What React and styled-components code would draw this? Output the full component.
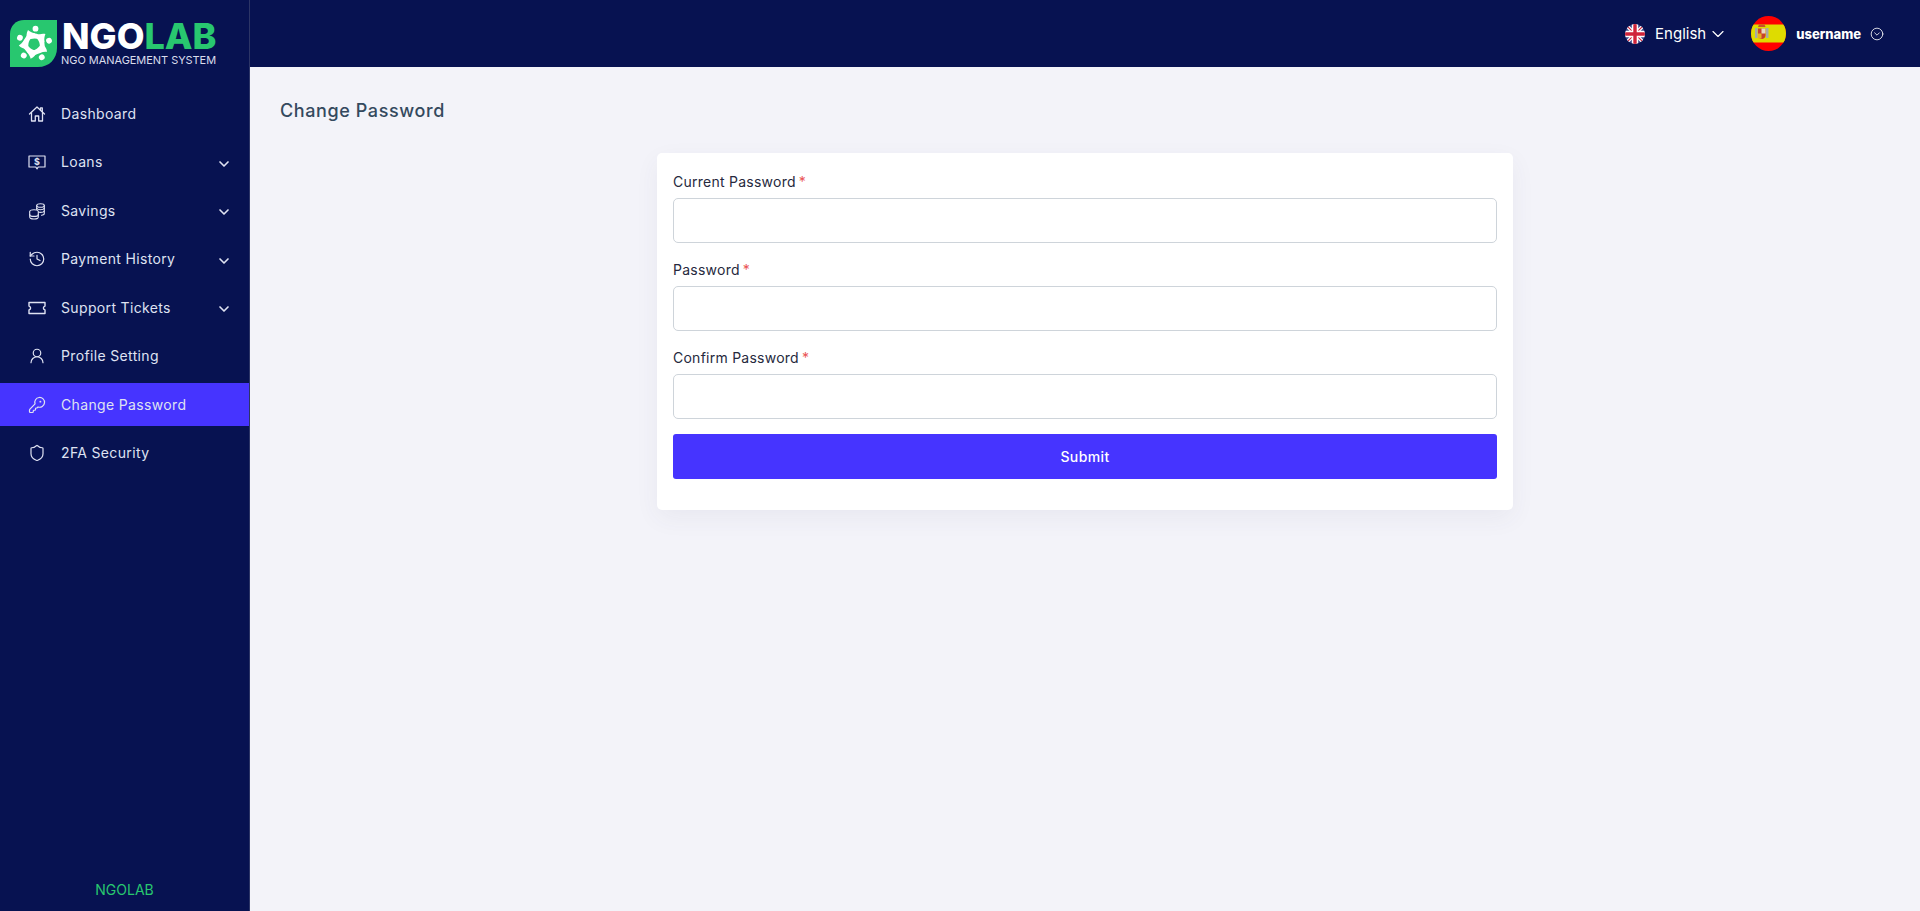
import React from "react";
import styled, { createGlobalStyle } from "styled-components";
import { History, UserRound, KeyRound, Shield, ChevronDown, CircleChevronDown } from "lucide-react";

const Global = createGlobalStyle`
  * { box-sizing: border-box; }
  html, body { margin: 0; padding: 0; height: 100%; }
  body { font-family: Inter, "Open Sans", "Liberation Sans", sans-serif; background: #f3f3f9; }
`;

const Shell = styled.div`
  display: flex;
  height: 911px;
  overflow: hidden;
`;

const Sidebar = styled.aside`
  width: 250px;
  flex: none;
  background: #071251;
  border-right: 1px solid #2c3566;
  display: flex;
  flex-direction: column;
`;

const LogoBar = styled.div`
  height: 67px;
  padding: 20px 0 0 10px;
  display: flex;
  gap: 4px;
  flex: none;
`;

const LogoWords = styled.div`
  display: flex;
  flex-direction: column;
`;

const LogoTitle = styled.div`
  font-size: 36px;
  line-height: 32px;
  height: 34px;
  font-weight: 800;
  letter-spacing: 0;
  color: #fff;
  margin-left: 1px;
  span { color: #28c76f; }
`;

const LogoSub = styled.div`
  font-size: 11px;
  line-height: 13px;
  color: #d9dcec;
  white-space: nowrap;
  letter-spacing: -0.05px;
`;

const Menu = styled.nav`
  padding-top: 25px;
  display: flex;
  flex-direction: column;
  gap: 5.5px;
`;

const MenuRow = styled.a`
  height: 43px;
  display: flex;
  align-items: center;
  padding: 0 17px 0 28px;
  color: #dfe2f2;
  font-size: 14px;
  font-weight: 420;
  letter-spacing: 0.35px;
  background: ${p => (p.$active ? "#4634ff" : "transparent")};
  svg { flex: none; }
`;

const MenuIcon = styled.span`
  width: 17px;
  height: 18px;
  margin-right: 16px;
  display: flex;
  align-items: center;
  justify-content: center;
`;

const MenuLabel = styled.span`
  flex: 1;
  margin-top: -1px;
`;

const MenuCaret = styled(ChevronDown)`
  margin-top: 3px;
`;

const SideFooter = styled.div`
  margin-top: auto;
  height: 36px;
  padding-top: 6px;
  text-align: center;
  color: #28c76f;
  font-size: 14px;
`;

const Main = styled.div`
  flex: 1;
  display: flex;
  flex-direction: column;
  min-width: 0;
`;

const TopBar = styled.header`
  height: 67px;
  flex: none;
  background: #071251;
  display: flex;
  align-items: center;
  justify-content: flex-end;
  padding-right: 36px;
  color: #fff;
`;

const LangBox = styled.div`
  display: flex;
  align-items: center;
  font-size: 15px;
  margin-right: 23px;
  gap: 10px;
`;

const LangCaret = styled(ChevronDown)`
  margin-left: -8px;
`;

const LangFlag = styled.svg`
  width: 20px;
  height: 20px;
  border-radius: 50%;
`;

const UserBox = styled.div`
  display: flex;
  align-items: center;
  font-size: 13px;
  font-weight: 800;
`;

const Avatar = styled.svg`
  width: 35px;
  height: 35px;
  border-radius: 50%;
  margin-right: 10px;
`;

const UserName = styled.span`
  margin-right: 9px;
`;

const Content = styled.main`
  padding: 30px 30px;
`;

const PageTitle = styled.h1`
  margin: 0 0 29px;
  font-size: 18px;
  line-height: 27px;
  font-weight: 450;
  letter-spacing: 0.6px;
  color: #34495e;
`;

const CardWrap = styled.div`
  display: flex;
  justify-content: center;
`;

const Card = styled.form`
  width: 856px;
  height: 357px;
  background: #fff;
  border-radius: 5px;
  padding: 18px 16px 16px;
  box-shadow: 0 8px 24px rgba(60, 60, 110, 0.06);
`;

const Field = styled.div`
  margin-bottom: 16px;
`;

const Label = styled.label`
  display: block;
  height: 21px;
  margin-bottom: 6px;
  font-size: 14px;
  line-height: 21px;
  font-weight: 420;
  color: #26293d;
  letter-spacing: 0.25px;
  i { color: #ea5455; font-style: normal; margin-left: 3px; }
`;

const Input = styled.input`
  display: block;
  width: 100%;
  height: 45px;
  border: 1px solid #ced4da;
  border-radius: 5px;
  background: #fff;
  outline: none;
`;

const Submit = styled.button`
  display: block;
  width: 100%;
  height: 45px;
  border: 0;
  border-radius: 3px;
  margin-top: -1px;
  background: #4634ff;
  color: #fff;
  font-family: inherit;
  font-size: 14px;
  font-weight: 450;
  letter-spacing: 0.4px;
`;

const Svg = ({ children, w = 1.3 }) => (
  <svg width="18" height="18" viewBox="0 0 18 18" fill="none" stroke="currentColor" strokeWidth={w} strokeLinejoin="round" strokeLinecap="round">
    {children}
  </svg>
);

const HomeIcon = () => (
  <Svg>
    <path d="M1.5 9 9 2l7.5 7" />
    <path d="M3.5 7.5V16h3.8v-5h3.4v5h3.8V7.5" />
    <path d="M12.5 4.8V2.8h1.8v3.600" />
  </Svg>
);

const LoanIcon = () => (
  <Svg w={1.2}>
    <path d="M1 3h16v11H10.200L9 15.800 7.800 14H1z" />
    <text x="9" y="12" textAnchor="middle" fontSize="9" fontWeight="700" fill="currentColor" stroke="none">$</text>
  </Svg>
);

const CoinsIcon = () => (
  <Svg w={1.1}>
    <ellipse cx="12.500" cy="3.500" rx="3.800" ry="1.800" />
    <path d="M8.700 3.500v7.500M16.300 3.500v8c0 1-1.600 1.700-2.800 1.800" />
    <path d="M8.700 6.200c.5 1 2.200 1.500 3.800 1.500s3.300-.5 3.800-1.500M8.700 8.900c.5 1 2.200 1.500 3.800 1.500s3.300-.5 3.800-1.500" />
    <ellipse cx="6" cy="9.800" rx="4.300" ry="2" fill="#071251" />
    <path d="M1.700 9.800v5.200c0 1.200 2 2 4.300 2s4.300-.8 4.300-2V9.800" fill="#071251" />
    <path d="M1.700 12.400c0 1.200 2 2 4.300 2s4.300-.8 4.300-2" />
  </Svg>
);

const TicketIcon = () => (
  <Svg w={1.4}>
    <path d="M1 3.500h16v3.600c-1.200.3-1.600 1-1.600 1.900s.4 1.600 1.600 1.900v3.600H1v-3.600c1.200-.3 1.600-1 1.600-1.900S2.200 7.400 1 7.100z" />
  </Svg>
);

const items = [
  { label: "Dashboard", Custom: HomeIcon },
  { label: "Loans", Custom: LoanIcon, sub: true },
  { label: "Savings", Custom: CoinsIcon, sub: true },
  { label: "Payment History", Icon: History, sub: true },
  { label: "Support Tickets", Custom: TicketIcon, sub: true },
  { label: "Profile Setting", Icon: UserRound },
  { label: "Change Password", Icon: KeyRound, active: true },
  { label: "2FA Security", Icon: Shield },
];

const LabeledInput = ({ label }) => (
  <Field>
    <Label>{label}<i>*</i></Label>
    <Input type="password" />
  </Field>
);

const angles = [0, 72, 144, 216, 288];

const LogoMark = () => (
  <svg width="47" height="47" viewBox="0 0 47 47">
    <path d="M14 0H47V28C47 39 39 47 28 47H0V14C0 6 6 0 14 0Z" fill="#28c76f" />
    <g fill="#fff">
      {angles.map(a => (
        <g key={a} transform={`rotate(${a} 24 24)`}>
          <circle cx="25.500" cy="8.700" r="2.900" />
          <path d="M18 10C21 13 26 13.500 29.500 14.500C32.500 16 34 19 34.500 22C31 19.500 28 18.800 24.500 18.500C22 18.500 19.500 19.300 17.800 20.500C16 17 16.200 13 18 10Z" />
        </g>
      ))}
    </g>
  </svg>
);

export default function App() {
  return (
    <Shell>
      <Global />
      <Sidebar>
        <LogoBar>
          <LogoMark />
          <LogoWords>
            <LogoTitle>NGO<span>LAB</span></LogoTitle>
            <LogoSub>NGO MANAGEMENT SYSTEM</LogoSub>
          </LogoWords>
        </LogoBar>
        <Menu>
          {items.map(({ label, Icon, Custom, sub, active }) => (
            <MenuRow key={label} $active={active}>
              <MenuIcon>{Custom ? <Custom /> : <Icon size={18} strokeWidth={1.6} />}</MenuIcon>
              <MenuLabel>{label}</MenuLabel>
              {sub && <MenuCaret size={16} strokeWidth={2.5} />}
            </MenuRow>
          ))}
        </Menu>
        <SideFooter>NGOLAB</SideFooter>
      </Sidebar>
      <Main>
        <TopBar>
          <LangBox>
            <LangFlag viewBox="0 0 20 20">
              <rect width="20" height="20" fill="#3b4a8c" />
              <path d="M0 0L20 20M20 0L0 20" stroke="#fff" strokeWidth="3.600" />
              <path d="M0 0L20 20M20 0L0 20" stroke="#d0243a" strokeWidth="1.200" />
              <path d="M10 0V20M0 10H20" stroke="#fff" strokeWidth="6.400" />
              <path d="M10 0V20M0 10H20" stroke="#d0243a" strokeWidth="3.400" />
            </LangFlag>
            <span>English</span>
            <LangCaret size={20} strokeWidth={1.4} />
          </LangBox>
          <UserBox>
            <Avatar viewBox="0 0 35 35">
              <rect width="35" height="35" fill="#f00" />
              <rect y="8.500" width="35" height="18" fill="#dedc00" />
              <rect x="4" y="12" width="2.500" height="10" fill="#a8a8a8" />
              <rect x="15" y="12" width="2.500" height="10" fill="#a8a8a8" />
              <path d="M7 12.500h7.500v7c0 2-1.700 3.500-3.700 3.500S7 21.500 7 19.500z" fill="#c8402a" />
              <rect x="10.500" y="12.500" width="4" height="5" fill="#e8d8c0" />
              <rect x="7" y="17.500" width="3.500" height="5" fill="#e8b020" />
              <path d="M7 11h7.500l-1-2.500h-5.500z" fill="#c8502a" />
            </Avatar>
            <UserName>username</UserName>
            <CircleChevronDown size={14} strokeWidth={1.4} />
          </UserBox>
        </TopBar>
        <Content>
          <PageTitle>Change Password</PageTitle>
          <CardWrap>
            <Card>
              <LabeledInput label="Current Password" />
              <LabeledInput label="Password" />
              <LabeledInput label="Confirm Password" />
              <Submit type="button">Submit</Submit>
            </Card>
          </CardWrap>
        </Content>
      </Main>
    </Shell>
  );
}
